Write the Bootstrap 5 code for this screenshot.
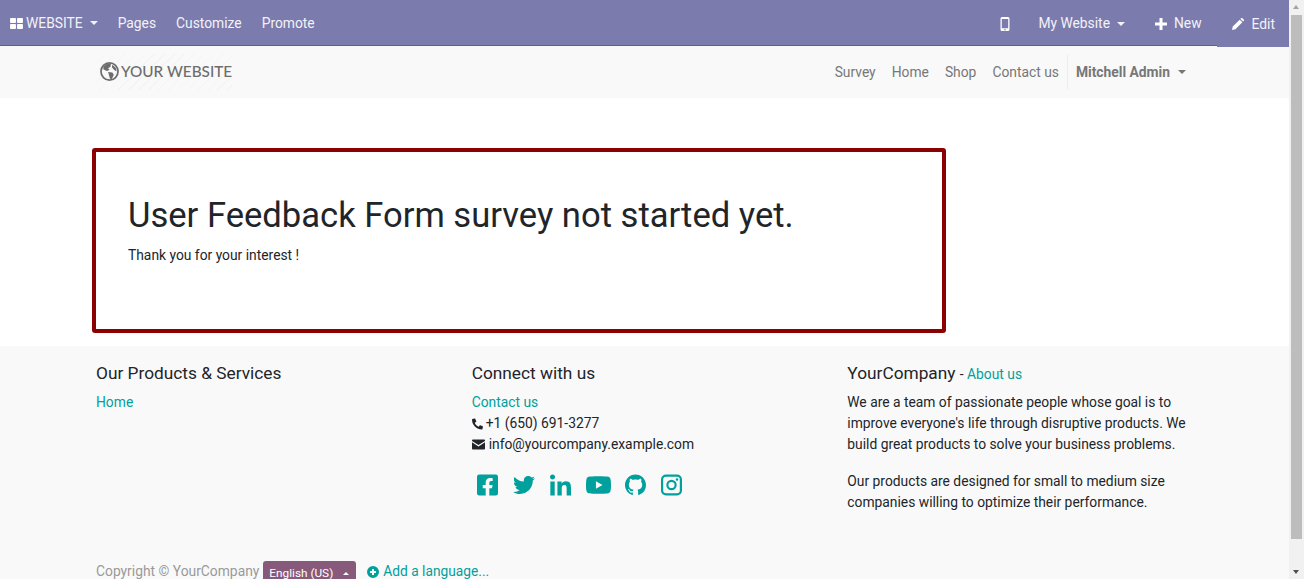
<!DOCTYPE html>
<html lang="en">

<head>
  <meta charset="UTF-8">
  <meta name="viewport" content="width=device-width, initial-scale=1.0">
  <title>User Feedback Form</title>
  <link rel="stylesheet" href="https://cdn.jsdelivr.net/npm/bootstrap@5.3.0/dist/css/bootstrap.min.css">
  <style>
    html, body {
      height: 100%;
      overflow: hidden;
    }

    body {
      font-family: Roboto, "Liberation Sans", sans-serif;
      font-size: 13.83px;
      line-height: 21px;
      color: #212529;
    }

    a {
      text-decoration: none;
    }

    .page-frame {
      height: 579px;
    }

    .page-scroll {
      width: 1289px;
      height: 579px;
      overflow: hidden;
    }

    .fake-bar {
      width: 15px;
      height: 579px;
      background: #f1f1f1;
      padding: 15px 2px 0;
      position: relative;
    }

    .fake-bar::before, .fake-bar::after {
      content: "";
      position: absolute;
      left: 4px;
      border-left: 3.5px solid transparent;
      border-right: 3.5px solid transparent;
    }

    .fake-bar::before {
      top: 5px;
      border-bottom: 4px solid #a3a3a3;
    }

    .fake-bar::after {
      bottom: 5px;
      border-top: 4px solid #505050;
    }

    .fake-thumb {
      height: 524px;
      background: #bdbdbd;
    }

    .edit-bar {
      height: 46px;
      background: #7c7bad;
      border-bottom: 1px solid #5f5e97;
      padding: 1px 0 0 10px;
    }

    .edit-bar a {
      color: #f2f2f8;
    }

    .edit-left {
      gap: 20px;
    }

    .grid-icon {
      margin-right: 3px;
    }

    .menu-caret {
      margin-left: 7px;
    }

    .edit-right {
      height: 46px;
      margin-bottom: -1px;
    }

    .top-phone {
      margin-right: 28px;
    }

    .top-site {
      margin-right: 30px;
    }

    .top-new {
      margin-right: 15px;
    }

    .top-new svg {
      margin-right: 7px;
    }

    .caret-down, .caret-up {
      display: inline-block;
      border-left: 4px solid transparent;
      border-right: 4px solid transparent;
    }

    .caret-down {
      border-top: 4px solid currentColor;
    }

    .caret-up {
      border-left-width: 3px;
      border-right-width: 3px;
      border-bottom: 3px solid currentColor;
    }

    .edit-cell {
      height: 46px;
      background: #7c7bad;
      padding: 1px 14px 0 15px;
    }

    .site-bar {
      height: 52px;
      background: #f9f9f9;
    }

    .site-wrap {
      width: 1127px;
      margin: 0 auto;
      padding: 0 15px;
    }

    .site-logo {
      width: 136px;
      height: 36px;
      padding-left: 4px;
      padding-bottom: 1px;
      gap: 2px;
      color: #6d6d6d;
      font-family: Lato, sans-serif;
      font-size: 15.3px;
      font-weight: 500;
      white-space: nowrap;
      background: repeating-linear-gradient(135deg, #f9f9f9 0, #f9f9f9 6px, #f4f4f4 6px, #f4f4f4 7px);
    }

    .site-logo svg {
      flex: none;
    }

    .site-links {
      gap: 16px;
      margin-right: 8px;
    }

    .site-links a {
      color: #777;
    }

    .user-menu {
      height: 36px;
      border-left: 1px solid #eeeeee;
      padding-left: 8px;
      margin-right: 7px;
      color: #777;
      font-weight: 700;
      gap: 8px;
    }

    .main-gap {
      height: 248px;
      padding-top: 50px;
    }

    .survey-box {
      width: 854px;
      height: 185px;
      margin-left: -4px;
      border: 4px solid #8b0000;
      border-radius: 3px;
      padding: 42px 32px 0;
    }

    .survey-box h1 {
      font-size: 34.6px;
      line-height: 42px;
      font-weight: 400;
      margin-bottom: 9px;
    }

    .site-footer {
      background: #f9f9f9;
      height: 300px;
      padding-top: 17px;
    }

    .foot-col {
      flex: 0 0 375.67px;
      padding-right: 15px;
    }

    .foot-title {
      font-size: 17.3px;
      line-height: 21px;
      height: 21px;
      font-weight: 400;
      margin-bottom: 8px;
    }

    .foot-sub {
      font-size: 13.83px;
    }

    .foot-col a, .add-lang {
      color: #00a09d;
    }

    .foot-col p {
      margin-bottom: 16px;
    }

    .phone-icon {
      margin-right: 3px;
    }

    .social-row {
      gap: 15px;
      margin: 18px 0 0 5px;
    }

    .social-row svg {
      height: 24px;
      fill: #00a09d;
    }

    .social-row .yt-icon {
      margin-right: -1px;
    }

    .copy-row {
      margin-top: 32px;
      color: #999;
      height: 40px;
    }

    .lang-btn {
      background: #875a7b;
      color: #fff;
      font-size: 11.8px;
      line-height: 18px;
      width: 93px;
      height: 26px;
      margin: 0 11px 0 4px;
      padding: 2px 7px 4px 6px;
      border-radius: 3px;
    }

    .add-lang {
      font-size: 13.75px;
    }
  </style>
</head>

<body>
  <div class="page-frame d-flex">
    <div class="page-scroll">
      <nav class="edit-bar d-flex justify-content-between align-items-center">
        <div class="edit-left d-flex align-items-center">
          <a href="#" class="d-flex align-items-center">
            <svg width="13" height="11" viewBox="0 0 14 12" fill="#fff" class="grid-icon"><rect width="6.4" height="5.4" rx=".8"/><rect x="7.6" width="6.4" height="5.4" rx=".8"/><rect y="6.6" width="6.4" height="5.4" rx=".8"/><rect x="7.6" y="6.6" width="6.4" height="5.4" rx=".8"/></svg>
            <span>WEBSITE</span>
            <span class="caret-down menu-caret"></span>
          </a>
          <a href="#">Pages</a>
          <a href="#">Customize</a>
          <a href="#">Promote</a>
        </div>
        <div class="edit-right d-flex align-items-center">
          <a href="#" class="top-phone d-flex">
            <svg width="10" height="14" viewBox="0 0 9 14"><path fill="#fff" d="M1.500 0h6A1.500 1.500 0 0 1 9 1.500v11A1.500 1.500 0 0 1 7.500 14h-6A1.500 1.500 0 0 1 0 12.500v-11A1.500 1.500 0 0 1 1.500 0zM1.300 2v9.300h6.400V2zM4.500 11.900a.8.8 0 1 0 0 1.600.8.8 0 0 0 0-1.600z"/></svg>
          </a>
          <a href="#" class="top-site d-flex align-items-center">My Website<span class="caret-down menu-caret"></span></a>
          <a href="#" class="top-new d-flex align-items-center">
            <svg width="12" height="12" viewBox="0 0 12 12" fill="#fff"><path d="M4.500 0h3v4.500H12v3H7.500V12h-3V7.500H0v-3h4.500z"/></svg>New
          </a>
          <a href="#" class="edit-cell d-flex align-items-center">
            <svg width="12" height="12" viewBox="0 0 13 13" fill="#fff" class="me-2"><path d="M0 13l.8-3.700L8.300 1.800l2.900 2.900-7.500 7.500zM9.100 1l.6-.6a1.200 1.200 0 0 1 1.700 0l1.200 1.200a1.200 1.200 0 0 1 0 1.700l-.6.600z"/></svg>Edit
          </a>
        </div>
      </nav>

      <header class="site-bar">
        <div class="site-wrap d-flex justify-content-between align-items-center h-100">
          <a href="#" class="site-logo d-flex align-items-center">
            <svg width="19" height="19" viewBox="0 0 20 20"><circle cx="10" cy="10" r="9" fill="none" stroke="#6d6d6d" stroke-width="1.800"/><path fill="#6d6d6d" d="M3.500 5l4-3.500 4 .5-.5 3-2.500 1.500 1.500 2-3 1-3.500-2zM8.500 10.500l4.500.5 1.500 2.500-2 4.500-2-.5-1-3.500zM13 3l3.500 3 1 4-2.500-1.500-2.500-3z"/></svg>
            <span>YOUR WEBSITE</span>
          </a>
          <div class="d-flex align-items-center">
            <div class="site-links d-flex">
              <a href="#">Survey</a>
              <a href="#">Home</a>
              <a href="#">Shop</a>
              <a href="#">Contact us</a>
            </div>
            <a href="#" class="user-menu d-flex align-items-center">Mitchell Admin<span class="caret-down"></span></a>
          </div>
        </div>
      </header>

      <main class="main-gap">
        <div class="site-wrap">
          <div class="survey-box">
            <h1>User Feedback Form survey not started yet.</h1>
            <div>Thank you for your interest !</div>
          </div>
        </div>
      </main>

      <footer class="site-footer">
        <div class="site-wrap">
          <div class="d-flex">
            <div class="foot-col">
              <div class="foot-title">Our Products &amp; Services</div>
              <div><a href="#">Home</a></div>
            </div>
            <div class="foot-col">
              <div class="foot-title">Connect with us</div>
              <div><a href="#">Contact us</a></div>
              <div class="d-flex align-items-center">
                <svg width="11" height="12" viewBox="0 0 512 512" fill="#212529" class="phone-icon"><path transform="translate(512 0) scale(-1 1)" d="M493.400 24.600l-104-24c-11.300-2.600-22.900 3.300-27.500 13.900l-48 112c-4.200 9.800-1.400 21.300 6.900 28l60.600 49.600c-36 76.700-98.900 140.500-177.200 177.200l-49.600-60.600c-6.800-8.300-18.200-11.100-28-6.900l-112 48C3.900 366.500-2 378.100.600 389.400l24 104C27.100 504.200 36.700 512 48 512c256.100 0 464-207.500 464-464 0-11.200-7.700-20.900-18.600-23.400z"/></svg>
                <span>+1 (650) 691-3277</span>
              </div>
              <div class="d-flex align-items-center">
                <svg width="13" height="11" viewBox="0 0 14 11" fill="#212529" class="me-1"><path d="M1.200 0h11.600c.7 0 1.200.5 1.200 1.200v.4L7 6 0 1.600v-.4C0 .5.500 0 1.200 0zM0 3.200l7 4.400 7-4.400v6.600c0 .7-.5 1.200-1.200 1.200H1.200C.5 11 0 10.500 0 9.800z"/></svg>
                <span>info@yourcompany.example.com</span>
              </div>
              <div class="social-row d-flex align-items-center">
                <svg width="21" viewBox="0 0 448 512"><path d="M400 32H48A48 48 0 0 0 0 80v352a48 48 0 0 0 48 48h137.250V327.690h-63V256h63v-54.640c0-62.150 37-96.480 93.670-96.480 27.140 0 55.520 4.840 55.520 4.840v61h-31.270c-30.810 0-40.420 19.120-40.420 38.730V256h68.780l-11 71.690h-57.780V480H400a48 48 0 0 0 48-48V80a48 48 0 0 0-48-48z"/></svg>
                <svg width="22" viewBox="0 0 512 512"><path d="M459.370 151.716c.325 4.548.325 9.097.325 13.645 0 138.720-105.583 298.558-298.558 298.558-59.452 0-114.680-17.219-161.137-47.106 8.447.974 16.568 1.299 25.340 1.299 49.055 0 94.213-16.568 130.274-44.832-46.132-.975-84.792-31.188-98.112-72.772 6.498.974 12.995 1.624 19.818 1.624 9.421 0 18.843-1.300 27.614-3.573-48.081-9.747-84.143-51.980-84.143-102.985v-1.299c13.969 7.797 30.214 12.670 47.431 13.319-28.264-18.843-46.781-51.005-46.781-87.391 0-19.492 5.197-37.360 14.294-52.954 51.655 63.675 129.300 105.258 216.365 109.807-1.624-7.797-2.599-15.918-2.599-24.040 0-57.828 46.782-104.934 104.934-104.934 30.213 0 57.502 12.670 76.670 33.137 23.715-4.548 46.456-13.320 66.599-25.340-7.798 24.366-24.366 44.833-46.132 57.827 21.117-2.273 41.584-8.122 60.426-16.243-14.292 20.791-32.161 39.308-52.628 54.253z"/></svg>
                <svg width="21" viewBox="0 0 448 512"><path d="M100.280 480H7.400V180.900h92.880zM53.790 140.100C24.090 140.100 0 115.500 0 85.800a53.790 53.790 0 0 1 107.580 0c0 29.700-24.100 54.300-53.790 54.300zM447.900 480h-92.680V334.400c0-34.700-.7-79.200-48.290-79.200-48.290 0-55.690 37.700-55.690 76.700V480h-92.780V180.900h89.080v40.800h1.300c12.400-23.500 42.690-48.300 87.880-48.300 94 0 111.280 61.900 111.280 142.300V480z"/></svg>
                <svg width="25" viewBox="15 0 546 512" class="yt-icon"><path d="M549.655 124.083c-6.281-23.650-24.787-42.276-48.284-48.597C458.781 64 288 64 288 64S117.220 64 74.629 75.486c-23.497 6.322-42.003 24.947-48.284 48.597-11.412 42.867-11.412 132.305-11.412 132.305s0 89.438 11.412 132.305c6.281 23.650 24.787 41.500 48.284 47.821C117.220 448 288 448 288 448s170.780 0 213.371-11.486c23.497-6.321 42.003-24.171 48.284-47.821 11.412-42.867 11.412-132.305 11.412-132.305s0-89.438-11.412-132.305zm-317.510 213.508V175.185l142.739 81.205-142.739 81.201z"/></svg>
                <svg width="21" viewBox="0 -.4 16 16.800"><path fill-rule="evenodd" d="M8 0C3.580 0 0 3.580 0 8c0 3.540 2.290 6.530 5.470 7.590.4.070.55-.17.55-.38 0-.19-.01-.82-.01-1.490-2.010.37-2.530-.49-2.690-.94-.09-.23-.48-.94-.82-1.130-.28-.15-.68-.52-.01-.53.630-.01 1.080.58 1.230.82.720 1.210 1.870.87 2.330.66.070-.52.280-.87.510-1.070-1.780-.2-3.640-.89-3.640-3.950 0-.87.310-1.590.820-2.150-.08-.2-.36-1.020.08-2.120 0 0 .67-.21 2.200.82.640-.18 1.320-.27 2-.27.680 0 1.360.09 2 .27 1.530-1.040 2.200-.82 2.200-.82.440 1.100.16 1.920.08 2.120.51.560.82 1.270.82 2.150 0 3.070-1.870 3.750-3.650 3.950.29.250.54.730.54 1.480 0 1.070-.01 1.930-.01 2.200 0 .21.150.46.550.38A8.013 8.013 0 0016 8c0-4.420-3.580-8-8-8z"/></svg>
                <svg width="21" viewBox="1.500 0 21 24"><path fill-rule="evenodd" d="M6.500 1.500h11a5 5 0 0 1 5 5v11a5 5 0 0 1-5 5h-11a5 5 0 0 1-5-5v-11a5 5 0 0 1 5-5zm0 2.200a2.800 2.800 0 0 0-2.800 2.800v11a2.800 2.800 0 0 0 2.800 2.800h11a2.800 2.800 0 0 0 2.800-2.800v-11a2.800 2.800 0 0 0-2.800-2.800zM12 6.800a5.200 5.200 0 1 1 0 10.400 5.200 5.200 0 0 1 0-10.400zm0 2.100a3.100 3.100 0 1 0 0 6.200 3.100 3.100 0 0 0 0-6.200zm5.500-3.700a1.300 1.300 0 1 1 0 2.600 1.300 1.300 0 0 1 0-2.600z"/></svg>
              </div>
            </div>
            <div class="foot-col">
              <div class="foot-title">YourCompany <span class="foot-sub">- <a href="#">About us</a></span></div>
              <p>We are a team of passionate people whose goal is to improve everyone's life through disruptive products. We build great products to solve your business problems.</p>
              <p>Our products are designed for small to medium size companies willing to optimize their performance.</p>
            </div>
          </div>
          <div class="copy-row d-flex align-items-start">
            <span>Copyright © YourCompany</span>
            <span class="lang-btn d-flex justify-content-between align-items-center">English (US)<span class="caret-up"></span></span>
            <a href="#" class="add-lang d-flex align-items-center">
              <svg width="12" height="12" viewBox="0 0 12 12" class="me-1"><path fill="#00a09d" fill-rule="evenodd" d="M6 0a6 6 0 1 1 0 12A6 6 0 0 1 6 0zM5 3v2H3v2h2v2h2V7h2V5H7V3z"/></svg>Add a language...
            </a>
          </div>
        </div>
      </footer>
    </div>
    <div class="fake-bar"><div class="fake-thumb"></div></div>
  </div>
</body>

</html>
